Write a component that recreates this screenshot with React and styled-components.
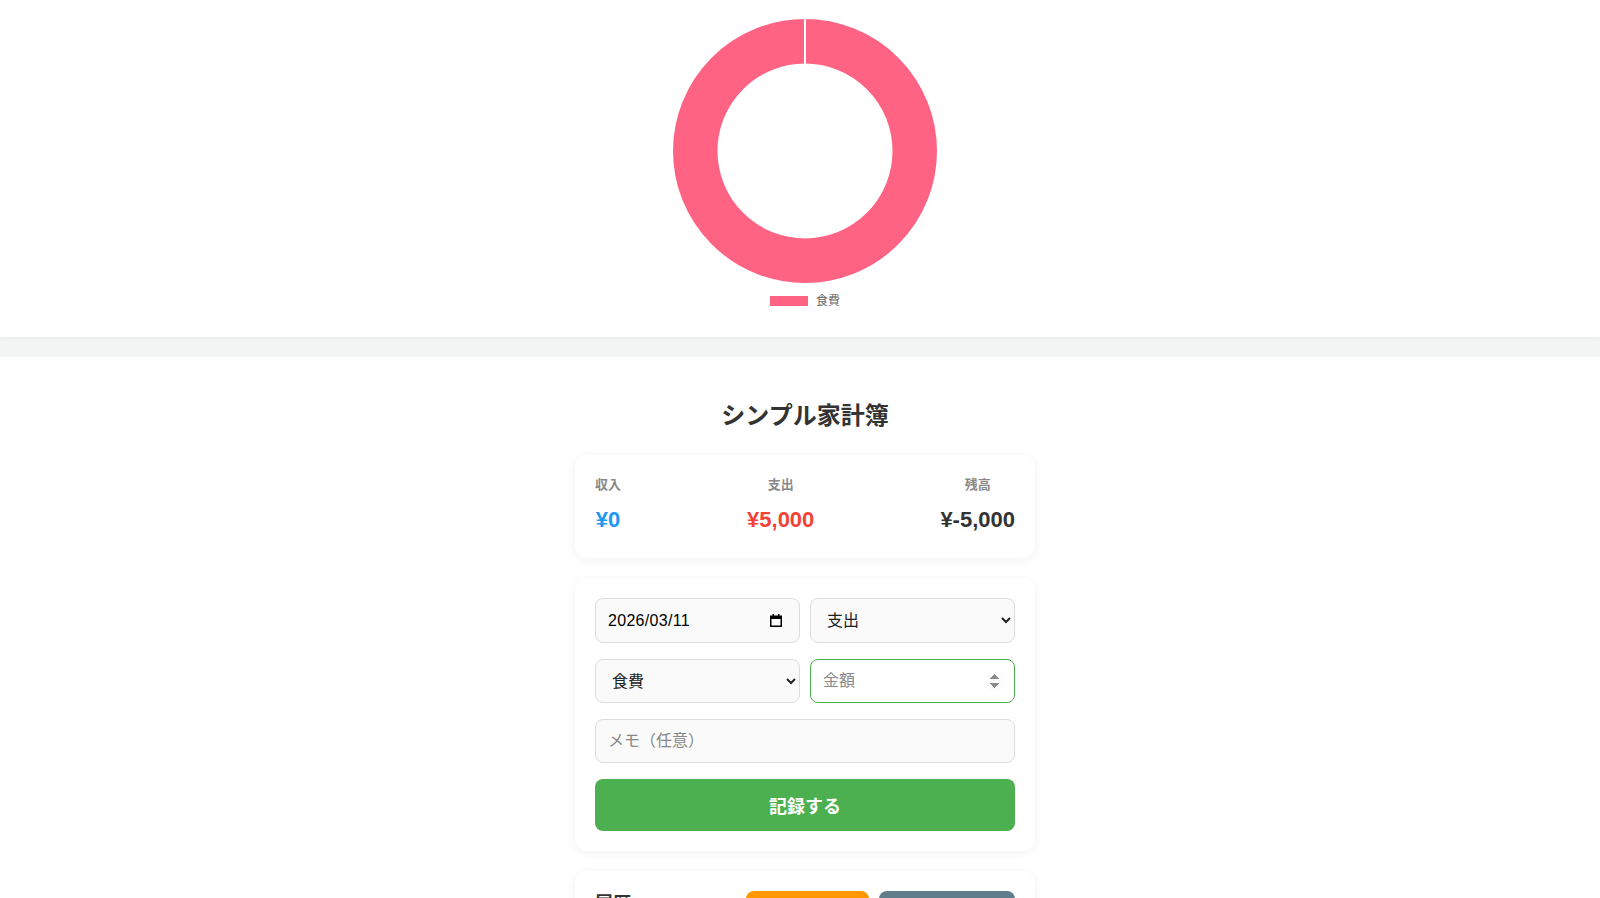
import React from 'react';
import styled, {createGlobalStyle} from 'styled-components';

const GlobalStyle = createGlobalStyle`
  html, body {
    margin: 0;
    padding: 0;
  }
  body {
    background-color: #f3f5f4;
    font-family: "Liberation Sans", "Noto Sans CJK JP", sans-serif;
    color: #333;
  }
  * {
    box-sizing: border-box;
  }
`

export default function App() {
    return (
        <>
            <GlobalStyle/>
            <ChartSection>
                <svg width="264" height="264" viewBox="0 0 264 264">
                    <circle cx="132" cy="132" r="109.75" fill="none" stroke="#FF6384" strokeWidth="44.5"/>
                    <line x1="132" y1="0" x2="132" y2="45" stroke="#fff" strokeWidth="2"/>
                </svg>
                <Legend>
                    <LegendBox/>
                    <span>食費</span>
                </Legend>
            </ChartSection>

            <Main>
                <Container>
                    <Title>シンプル家計簿</Title>

                    <Card $pad="20px">
                        <Summary>
                            <SummaryItem>
                                <SummaryLabel>収入</SummaryLabel>
                                <SummaryValue $color="#2196F3">¥0</SummaryValue>
                            </SummaryItem>
                            <SummaryItem>
                                <SummaryLabel>支出</SummaryLabel>
                                <SummaryValue $color="#f44336">¥5,000</SummaryValue>
                            </SummaryItem>
                            <SummaryItem>
                                <SummaryLabel>残高</SummaryLabel>
                                <SummaryValue $color="#333">¥-5,000</SummaryValue>
                            </SummaryItem>
                        </Summary>
                    </Card>

                    <Card $pad="20px">
                        <Form onSubmit={e => e.preventDefault()}>
                            <DateBox $h={45}>
                                <DateText type="text" defaultValue="2026/03/11" aria-label="日付"/>
                                <svg width="12" height="13" viewBox="0 0 12 13">
                                    <rect x="0.75" y="2.25" width="10.5" height="10" fill="none" stroke="#000" strokeWidth="1.5"/>
                                    <rect x="0" y="2" width="12" height="3" fill="#000"/>
                                    <rect x="2.5" y="0" width="1.5" height="3" fill="#000"/>
                                    <rect x="8" y="0" width="1.5" height="3" fill="#000"/>
                                </svg>
                            </DateBox>
                            <Select defaultValue="expense" $h={45}>
                                <option value="expense">支出</option>
                                <option value="income">収入</option>
                            </Select>
                            <Select defaultValue="food" $h={44}>
                                <option value="food">食費</option>
                                <option value="daily">日用品</option>
                                <option value="other">その他</option>
                            </Select>
                            <Field type="number" placeholder="金額" autoFocus $h={44}/>
                            <Field type="text" placeholder="メモ（任意）" $h={44} $wide/>
                            <Submit type="submit">記録する</Submit>
                        </Form>
                    </Card>

                    <Card $pad="20px">
                        <HistoryHead>
                            <HistoryTitle>履歴</HistoryTitle>
                            <Actions>
                                <SmallButton $bg="#FF9800" $w={123}>CSV出力</SmallButton>
                                <SmallButton $bg="#607D8B" $w={136}>全データ削除</SmallButton>
                            </Actions>
                        </HistoryHead>
                        <Empty>まだ記録がありません</Empty>
                    </Card>
                </Container>
            </Main>
        </>
    )
}

const ChartSection = styled.section`
  background-color: #ffffff;
  height: 337px;
  display: flex;
  flex-direction: column;
  align-items: center;
  padding: 19px 0 0 10px;
  position: relative;
  z-index: 1;
  box-shadow: 0 1px 4px rgba(0, 0, 0, 0.06);
`
const Legend = styled.div`
  display: flex;
  align-items: center;
  gap: 8px;
  margin-top: 11px;
  font-size: 12px;
  line-height: 14px;
  color: #666;
`
const LegendBox = styled.span`
  display: block;
  width: 38px;
  height: 10px;
  background-color: #FF6384;
`
const Main = styled.main`
  margin-top: 20px;
  background-color: #ffffff;
  padding: 41px 0 40px 10px;
  min-height: 600px;
`
const Container = styled.div`
  width: 460px;
  margin: 0 auto;
  display: flex;
  flex-direction: column;
  gap: 20px;
`
const Title = styled.h1`
  margin: 0 0 1px 0;
  text-align: center;
  font-size: 24px;
  line-height: 36px;
  font-weight: bold;
  color: #333;
`
const Card = styled.div`
  background-color: #ffffff;
  border-radius: 12px;
  padding: ${props => props.$pad};
  box-shadow: 0 2px 10px rgba(0, 0, 0, 0.06);
`
const Summary = styled.div`
  display: flex;
  justify-content: space-between;
`
const SummaryItem = styled.div`
  text-align: center;
`
const SummaryLabel = styled.div`
  font-size: 13px;
  line-height: 20px;
  font-weight: bold;
  color: #888;
  margin-bottom: 6px;
`
const SummaryValue = styled.div`
  font-size: 22px;
  line-height: 37px;
  font-weight: bold;
  color: ${props => props.$color};
`
const Form = styled.form`
  display: grid;
  grid-template-columns: minmax(0, 1fr) minmax(0, 1fr);
  column-gap: 10px;
  row-gap: 16px;
`
const Field = styled.input`
  grid-column: ${props => props.$wide ? '1 / -1' : 'auto'};
  height: ${props => props.$h}px;
  width: 100%;
  padding: 0 12px;
  font-size: 16px;
  font-family: inherit;
  color: #222;
  background-color: #fafafa;
  border: 1px solid #ddd;
  border-radius: 8px;
  outline: none;
  &::placeholder {
    color: #888;
  }
  &:focus {
    background-color: #ffffff;
    border-color: #4CAF50;
  }
  &::-webkit-inner-spin-button {
    opacity: 1;
  }
`
const DateBox = styled.label`
  display: flex;
  align-items: center;
  min-width: 0;
  height: ${props => props.$h}px;
  padding: 0 17px 0 12px;
  background-color: #fafafa;
  border: 1px solid #ddd;
  border-radius: 8px;
  cursor: text;
`
const DateText = styled.input`
  flex: 1;
  width: 0;
  min-width: 0;
  padding: 0;
  border: none;
  background: transparent;
  outline: none;
  font-size: 16px;
  font-family: inherit;
  color: #000;
  letter-spacing: 0.3px;
`
const Select = styled.select`
  height: ${props => props.$h}px;
  width: 100%;
  padding: 0 8px 0 12px;
  font-size: 16px;
  font-family: inherit;
  color: #222;
  background-color: #fafafa;
  border: 1px solid #ddd;
  border-radius: 8px;
  outline: none;
`
const Submit = styled.button`
  grid-column: 1 / -1;
  height: 52px;
  border: none;
  border-radius: 8px;
  background-color: #4CAF50;
  color: #ffffff;
  font-size: 18px;
  font-weight: bold;
  font-family: inherit;
  cursor: pointer;
  &:hover {
    background-color: #43A047;
  }
`
const HistoryHead = styled.div`
  display: flex;
  align-items: flex-start;
  justify-content: space-between;
`
const HistoryTitle = styled.h2`
  margin: 0;
  font-size: 18px;
  line-height: 27px;
  font-weight: bold;
  color: #333;
`
const Actions = styled.div`
  display: flex;
  gap: 10px;
`
const SmallButton = styled.button`
  width: ${props => props.$w}px;
  height: 36px;
  border: none;
  border-radius: 8px;
  background-color: ${props => props.$bg};
  color: #ffffff;
  font-size: 14px;
  font-weight: bold;
  font-family: inherit;
`
const Empty = styled.p`
  margin: 20px 0 0 0;
  text-align: center;
  color: #999;
  font-size: 14px;
`
